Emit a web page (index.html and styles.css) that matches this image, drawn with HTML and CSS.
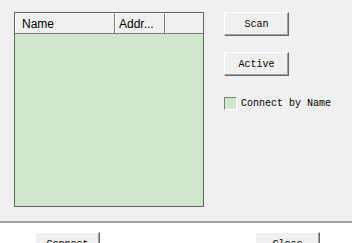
FILE: index.html
```html
<!DOCTYPE html>
<html lang="en">
<head>
    <meta charset="UTF-8">
    <title>Device Connect</title>
    <link rel="stylesheet" href="styles.css">
</head>
<body>
    <div class="main">
        <div class="list">
            <div class="list-head">
                <div class="col col-name">Name</div>
                <div class="col col-addr">Addr...</div>
                <div class="col col-rest"></div>
            </div>
            <div class="list-body"></div>
        </div>

        <div class="side">
            <button class="btn">Scan</button>
            <button class="btn btn-active">Active</button>
            <label class="check">
                <span class="box"></span>
                <span>Connect by Name</span>
            </label>
        </div>
    </div>

    <div class="bottom">
        <button class="btn btn-connect">Connect</button>
        <button class="btn btn-close">Close</button>
    </div>
</body>
</html>
```

FILE: styles.css
```css
body {
    margin: 0;
    width: 352px;
    height: 243px;
    overflow: hidden;
    background: #f0f0f0;
    font-family: "Liberation Mono", monospace;
    font-size: 10px;
    color: #000;
}

.main {
    display: flex;
    height: 221px;
    padding: 12px 0 0 14px;
    box-sizing: border-box;
}

.list {
    width: 190px;
    height: 195px;
    border: 1px solid #646464;
    box-sizing: border-box;
    background: #cfe7cb;
    display: flex;
    flex-direction: column;
}

.list-head {
    display: flex;
    height: 20px;
    border-bottom: 1px solid #7a7a7a;
    background: #f0f0f0;
    font-family: "Liberation Sans", Arial, sans-serif;
    font-size: 12px;
}

.col {
    border-left: 1px solid #fff;
    border-top: 1px solid #fff;
    border-right: 1px solid #7a7a7a;
    box-sizing: border-box;
    padding: 2px 0 0 6px;
    line-height: 16px;
    white-space: nowrap;
}

.col-name { width: 100px; }
.col-addr { width: 50px; padding-left: 3px; }
.col-rest { flex: 1; border-right: none; }

.list-body {
    flex: 1;
}

.side {
    display: flex;
    flex-direction: column;
    align-items: flex-start;
    margin-left: 20px;
}

.btn {
    width: 65px;
    height: 24px;
    padding: 0;
    background: #f0f0f0;
    border: 1px solid;
    border-color: #fff #696969 #696969 #fff;
    box-shadow: inset -1px -1px #a0a0a0;
    font-family: "Liberation Mono", monospace;
    font-size: 10px;
    color: #000;
}

.btn-active {
    margin-top: 16px;
}

.check {
    display: flex;
    align-items: center;
    margin-top: 21px;
    height: 13px;
    gap: 4px;
}

.box {
    width: 13px;
    height: 13px;
    box-sizing: border-box;
    border: 1px solid;
    border-color: #808080 #fff #fff #808080;
    background: #cfe7cb;
}

.bottom {
    height: 22px;
    border-top: 2px solid #a0a0a0;
    background: #fff;
    box-sizing: border-box;
    padding-top: 9px;
    display: flex;
    align-items: flex-start;
    overflow: hidden;
}

.btn-connect {
    margin-left: 35px;
}

.btn-close {
    margin-left: 155px;
}
```
